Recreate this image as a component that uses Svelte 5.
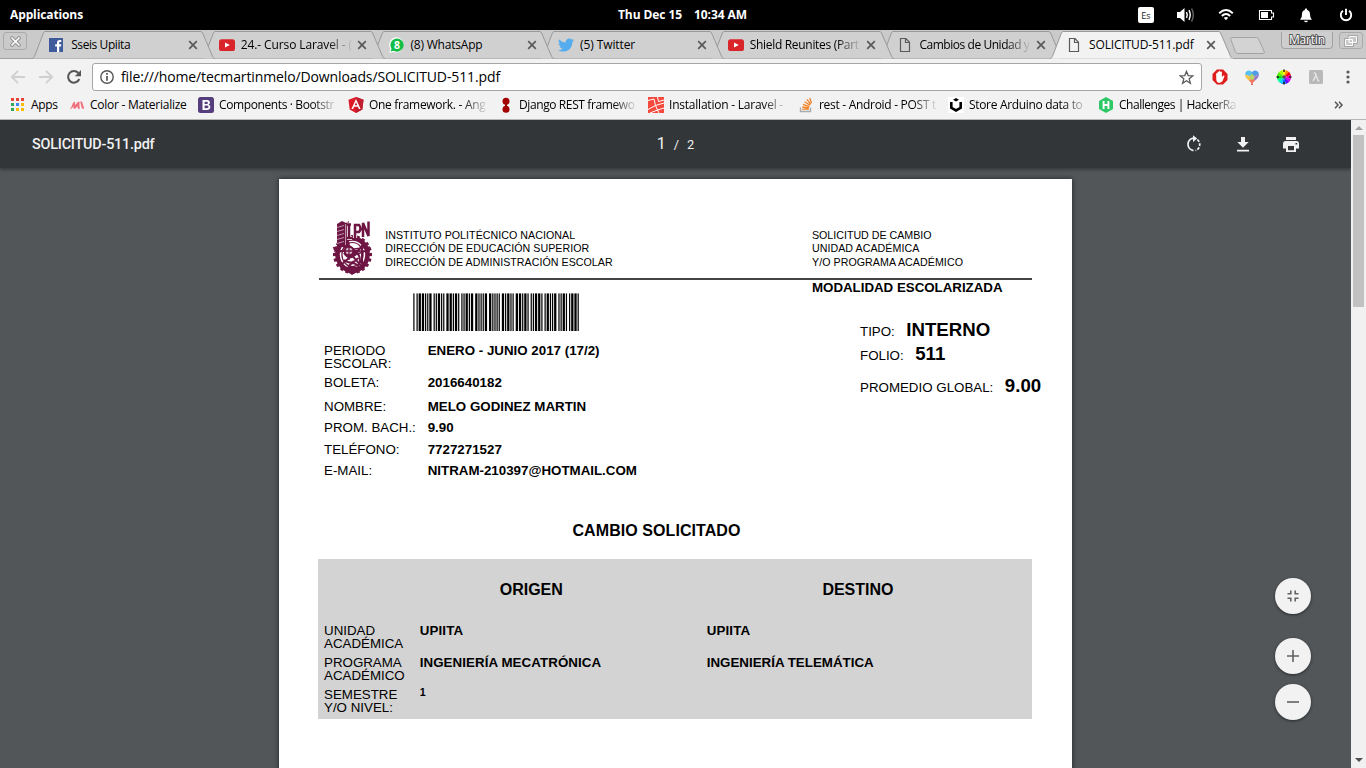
<script>
  const tabs = [
    { icon: 'fb', title: 'Sseis Upiita', w: 59 },
    { icon: 'yt', title: '24.- Curso Laravel - (', w: 111, fade: true },
    { icon: 'wa', title: '(8) WhatsApp', w: 72 },
    { icon: 'tw', title: '(5) Twitter', w: 55 },
    { icon: 'yt', title: 'Shield Reunites (Part', w: 109, fade: true },
    { icon: 'doc', title: 'Cambios de Unidad y', w: 110, fade: true },
    { icon: 'doc', title: 'SOLICITUD-511.pdf', w: 104.5, active: true }
  ];
  const bookmarks = [
    { icon: 'apps', title: 'Apps', w: 26.5, slot: 60 },
    { icon: 'mat', title: 'Color - Materialize', w: 96.5, slot: 129 },
    { icon: 'boot', title: 'Components · Bootstr', w: 115, slot: 150, fade: true },
    { icon: 'ang', title: 'One framework. - Ang', w: 116.5, slot: 150, fade: true },
    { icon: 'dj', title: 'Django REST framewo', w: 115.5, slot: 150, fade: true },
    { icon: 'lar', title: 'Installation - Laravel -', w: 114, slot: 150, fade: true },
    { icon: 'so', title: 'rest - Android - POST t', w: 117, slot: 150, fade: true },
    { icon: 'ins', title: 'Store Arduino data to', w: 113.5, slot: 150, fade: true },
    { icon: 'hr', title: 'Challenges | HackerRa', w: 117, slot: 150, fade: true }
  ];
  const fields = [
    { label: 'PERIODO ESCOLAR:', value: 'ENERO - JUNIO 2017 (17/2)', h: 32 },
    { label: 'BOLETA:', value: '2016640182', h: 24 },
    { label: 'NOMBRE:', value: 'MELO GODINEZ MARTIN', h: 21 },
    { label: 'PROM. BACH.:', value: '9.90', h: 22 },
    { label: 'TELÉFONO:', value: '7727271527', h: 21 },
    { label: 'E-MAIL:', value: 'NITRAM-210397@HOTMAIL.COM', h: 21 }
  ];
  const rows = [
    { label: 'UNIDAD ACADÉMICA', from: 'UPIITA', fw: 43.5, to: 'UPIITA', tw: 43.5 },
    { label: 'PROGRAMA ACADÉMICO', from: 'INGENIERÍA MECATRÓNICA', fw: 181.5, to: 'INGENIERÍA TELEMÁTICA', tw: 167 },
    { label: 'SEMESTRE Y/O NIVEL:', from: '1', fw: 6, to: '', small: true }
  ];

  // Code 39 encoding, wide elements are two modules
  const code39 = {
    '0': 'nnnwwnwnn', '1': 'wnnwnnnnw', '2': 'nnwwnnnnw', '4': 'nnnwwnnnw',
    '6': 'nnwwwnnnn', '8': 'wnnwnnwnn', '*': 'nwnnwnwnn'
  };
  const bars = [];
  let pos = 0;
  for (const ch of '*2016640182*') {
    [...code39[ch]].forEach((e, i) => {
      const w = e === 'w' ? 2 : 1;
      if (i % 2 === 0) bars.push([pos, w]);
      pos += w;
    });
    pos += 1;
  }
  const teeth = Array.from({ length: 20 }, (_, i) => i * 18);
  const hues = ['#ff0', '#f80', '#f00', '#f0a', '#c0f', '#50f', '#06f', '#0cf', '#0f9', '#0d0', '#5e0', '#af0'];

  // Spreads a line of text over an exact width
  function fit(node, w) {
    if (!node.textContent.length) return;
    const natural = node.getBoundingClientRect().width;
    node.style.letterSpacing = (w - natural) / node.textContent.length + 'px';
  }
</script>

{#snippet icon(name)}
  <svg class="ico" viewBox="0 0 16 16" width="16" height="16">
    {#if name === 'fb'}
      <rect x="0" y="1" width="14" height="14" fill="#3f5b9b" />
      <path d="M8 15V9.5H6.2V7.3H8V5.7C8 4 9 3 10.7 3H12.3V5.1H11.2C10.4 5.1 10.2 5.5 10.2 6.1V7.3H12.3L12 9.5H10.2V15Z" fill="#fff" />
    {:else if name === 'yt'}
      <rect x="0" y="2.3" width="16" height="11.7" rx="2.6" fill="#d9252a" />
      <path d="M6 5.5L10.8 8L6 10.5Z" fill="#fff" />
    {:else if name === 'wa'}
      <path d="M8 0.3A7.6 7.6 0 1 1 4.6 15L0.3 16L1.4 12A7.6 7.6 0 0 1 8 .3Z" fill="#fff" />
      <path d="M8 1.4A6.6 6.6 0 1 1 4.8 13.7L1.7 14.5L2.5 11.5A6.6 6.6 0 0 1 8 1.4Z" fill="#13bd45" />
      <text x="8" y="12" text-anchor="middle" font-size="10.5" font-weight="700" font-family="Open Sans, sans-serif" fill="#fff">8</text>
    {:else if name === 'tw'}
      <path d="M16 3.1C15.4 3.4 14.8 3.5 14.1 3.6C14.8 3.2 15.3 2.6 15.5 1.8C14.9 2.2 14.2 2.5 13.4 2.6A3.3 3.3 0 0 0 7.8 5.6C5.1 5.5 2.7 4.2 1.1 2.2C.2 3.7.7 5.6 2.1 6.6C1.6 6.6 1.1 6.4.6 6.2C.6 7.8 1.7 9.1 3.2 9.4C2.8 9.6 2.3 9.6 1.8 9.5C2.2 10.8 3.4 11.7 4.8 11.8A6.6 6.6 0 0 1 0 13.1C5.9 16.9 14.4 13.2 14.4 4.9C15 4.4 15.6 3.8 16 3.1Z" fill="#55acee" />
    {:else if name === 'doc'}
      <path d="M2.5 1.5H8L11.5 5.3V14.5H2.5ZM7.5 1.5V5.5H11.5" fill="none" stroke="#5a5a5a" stroke-width="1.2" />
    {:else if name === 'apps'}
      {#each ['#ea4335', '#ea4335', '#ea4335', '#34a853', '#4285f4', '#fbbc05', '#34a853', '#fbbc05', '#fbbc05'] as c, i}
        <rect x={2 + (i % 3) * 5} y={1 + Math.floor(i / 3) * 5} width="3" height="3" fill={c} />
      {/each}
    {:else if name === 'mat'}
      <path d="M1 11.5C3 11 3.2 5 5.7 4.5C6.4 5.7 5.6 7.3 6.2 8.1C7.5 7 8.2 4.8 10.2 4.5C11 5.6 10 9.3 11 11.5C9.7 12.6 8.5 11.5 8.4 9C7.5 10.5 6.5 12.4 4.8 11.7C4.3 11 4.3 10 4.2 9C3.5 11 2.6 12.3 1 11.5ZM11.2 4.6L13 4.5L15.2 11.5C13.5 12.3 12.8 11.5 12.3 9.5Z" fill="#f0707c" />
    {:else if name === 'boot'}
      <rect width="16" height="16" rx="2.5" fill="#563d7c" />
      <path d="M4.5 3H8.9C12.8 3 12.6 7.1 10.3 7.6C13.4 8.3 13 13 9 13H4.5ZM6.6 4.7V7H8.5C10.5 7 10.3 4.7 8.5 4.7ZM6.6 8.6V11.3H8.7C11.2 11.3 11 8.6 8.7 8.6Z" fill="#fff" fill-rule="evenodd" />
    {:else if name === 'ang'}
      <path d="M8 0L15.5 2.7L14.3 12.5L8 16L1.7 12.5L.5 2.7Z" fill="#dd1b26" />
      <path d="M8 0L15.5 2.7L14.3 12.5L8 16Z" fill="#bf1e2e" />
      <path d="M8 1.9L3.4 12H5.1L6.1 9.8H9.9L10.9 12H12.6ZM8 5.2L9.3 8.3H6.7Z" fill="#fff" fill-rule="evenodd" />
    {:else if name === 'dj'}
      <circle cx="8" cy="4.2" r="3.5" fill="#a30000" /><circle cx="8" cy="12.3" r="3.5" fill="#a30000" />
      <rect x="7" y="7" width="2" height="2" fill="#a30000" />
    {:else if name === 'lar'}
      <rect width="16" height="16" fill="#f4493c" />
      <path d="M0 3.5L6 2L7.5 8.5L16 6M0 12.5L7.5 8.5L9.5 13L16 11M9.5 0L10.5 4.5L16 3M2 16L9.5 13L11 16" stroke="#fff" fill="none" stroke-width="1" />
    {:else if name === 'so'}
      <path d="M2.5 10.5V14.5H12.5V10.5" fill="none" stroke="#a9abae" stroke-width="1.4" />
      <path d="M4.3 12.2H10.8M4.4 10L10.9 11M5 7.4L11.3 9.6M6.6 4.8L12 8.3M9 2.4L12.7 7.3M11.8 1L13.5 6.3" fill="none" stroke="#f48024" stroke-width="1.3" />
    {:else if name === 'ins'}
      <rect width="16" height="16" fill="#fff" />
      <path d="M3.3 5V10.8L8 13.5L12.7 10.8V5" fill="none" stroke="#000" stroke-width="2.6" />
      <path d="M5 2.8L8 1L11 2.8L8 4.6Z" />
    {:else if name === 'hr'}
      <path d="M8 0L15 4V12L8 16L1 12V4Z" fill="#2ec866" />
      <path d="M5.6 4V12M10.4 4V12M5.6 8H10.4" stroke="#fff" stroke-width="1.9" />
    {/if}
  </svg>
{/snippet}

<div class="screen">
  <header class="panel">
    <b class="apps-menu"><span use:fit={73}>Applications</span></b>
    <b class="clock"><span use:fit={64}>Thu Dec 15</span><span use:fit={53}>10:34 AM</span></b>
    <div class="tray">
      <span class="lang">Es</span>
      <svg class="volume" width="20" height="16" viewBox="0 0 20 16"><path d="M1 5H4L8.5 1V15L4 11H1Z" fill="#fff" /><path d="M10.5 5Q12 8 10.5 11M13 3.2Q15.4 8 13 12.8" stroke="#fff" stroke-width="1.5" fill="none" /><path d="M15.6 1.5Q19 8 15.6 14.5" stroke="#666" stroke-width="1.4" fill="none" /></svg>
      <svg class="wifi" width="16" height="14" viewBox="0 0 16 14"><path d="M1.2 5.2Q8 -1 14.8 5.2M3.8 8Q8 4 12.2 8" stroke="#fff" stroke-width="1.9" fill="none" /><path d="M5.8 9.8Q8 8 10.2 9.8L8 12.3Z" fill="#fff" /></svg>
      <svg class="battery" width="17" height="12" viewBox="0 0 17 12"><path d="M1.5 1.5H13.5V4H15.5V8H13.5V10.5H1.5Z" stroke="#fff" stroke-width="1.1" fill="none" /><rect x="3" y="3" width="7" height="6" fill="#fff" /></svg>
      <svg class="bell" width="14" height="15" viewBox="0 0 14 15"><path d="M7 .5C8 .5 8.2 1.2 8.2 2C10.5 2.6 11 4.5 11.1 7C11.2 9.3 12 10.5 13 11.7H1C2 10.5 2.8 9.3 2.9 7C3 4.5 3.5 2.6 5.8 2C5.8 1.2 6 .5 7 .5ZM5 12.7H9Q8.5 14.3 7 14.3T5 12.7Z" fill="#fff" /></svg>
      <svg class="power" width="14" height="14" viewBox="0 0 14 14"><path d="M4 2.8A5.2 5.2 0 1 0 10 2.8M7 .8V7" stroke="#fff" stroke-width="1.9" fill="none" /></svg>
    </div>
  </header>

  <div class="tabstrip">
    <div class="win-close"><svg width="11" height="11" viewBox="0 0 11 11"><path d="M2 2L9 9M9 2L2 9" stroke="#8f8f8f" stroke-width="3.6" stroke-linecap="round" /><path d="M2 2L9 9M9 2L2 9" stroke="#fff" stroke-width="1.7" stroke-linecap="round" /></svg></div>
    {#each tabs as t, i}
      <div class="tab" class:active={t.active} style:z-index={t.active ? 20 : 10 - i}>
        <svg class="shape" width="184" height="29" viewBox="0 0 184 29">
          <path d="M0 28.5C2 28 2 27 3 25L11 4C12 1.8 12 1.5 14 1.5H168C170 1.5 170 2 171 4L180 25C181 27.5 181.5 28.5 183 28.5" fill={t.active ? '#f2f2f2' : '#d0d0d0'} stroke="#999" />
          {#if t.active}<path d="M1 29H183" stroke="#f2f2f2" />{/if}
        </svg>
        <div class="tab-body">
          {@render icon(t.icon)}
          <div class="tab-title" class:fade={t.fade}><span use:fit={t.w}>{t.title}</span></div>
          <svg class="x" width="10" height="10" viewBox="0 0 10 10"><path d="M1.2 1.2L8.8 8.8M8.8 1.2L1.2 8.8" stroke="#5a5a5a" stroke-width="1.7" /></svg>
        </div>
      </div>
    {/each}
    <svg class="newtab" width="36" height="18" viewBox="0 0 36 18"><path d="M2 .5H25.5C27.5 .5 28 1 29 3L34 14C34.6 16 34.5 16.5 33 16.5H9C7 16.5 6 16 5.3 14.5L1 3C.4 1.4.6.5 2 .5Z" fill="#d3d3d3" stroke="#a3a3a3" /></svg>
    <div class="user"><svg width="38" height="15"><text x="1" y="12" textLength="36">Martin</text></svg></div>
    <div class="restore"><svg width="14" height="12" viewBox="0 0 14 12"><path d="M5 1.5H12.5V7.5H5ZM1.5 4.5H8.5V10.5H1.5Z" fill="#ddd" stroke="#999" stroke-width="2.4" /><path d="M5 1.5H12.5V7.5H5ZM1.5 4.5H8.5V10.5H1.5Z" fill="#c8c8c8" stroke="#fff" stroke-width="1" /></svg></div>
  </div>

  <div class="toolbar">
    <svg class="nav" width="16" height="16" viewBox="0 0 16 16"><path d="M15 8H2M8 1.8L1.8 8L8 14.2" fill="none" stroke="#d0d0d0" stroke-width="1.9" /></svg>
    <svg class="nav fwd" width="16" height="16" viewBox="0 0 16 16"><path d="M1 8H14M8 1.8L14.2 8L8 14.2" fill="none" stroke="#d0d0d0" stroke-width="1.9" /></svg>
    <svg class="nav reload" width="16" height="16" viewBox="0 0 16 16"><path d="M13.3 10A5.8 5.8 0 1 1 12.3 4" fill="none" stroke="#555" stroke-width="2" /><path d="M15 1V7.2H8.8Z" fill="#555" /></svg>
    <div class="omnibox">
      <svg width="14" height="14" viewBox="0 0 14 14"><circle cx="7" cy="7" r="6.2" fill="none" stroke="#555" stroke-width="1.4" /><path d="M7 3.1V4.8M7 6.1V10.8" stroke="#555" stroke-width="1.7" /></svg>
      <span class="url"><span use:fit={379}>file:///home/tecmartinmelo/Downloads/SOLICITUD-511.pdf</span></span>
      <svg class="star" width="15" height="15" viewBox="0 0 15 15"><path d="M7.5 1.4L9.2 5.6L13.7 5.9L10.2 8.8L11.4 13.3L7.5 10.8L3.6 13.3L4.8 8.8L1.3 5.9L5.8 5.6Z" fill="none" stroke="#5a5a5a" stroke-width="1.3" /></svg>
    </div>
    <div class="exts">
      <svg width="16" height="16" viewBox="0 0 16 16"><path d="M4.9.5H11.1L15.5 4.9V11.1L11.1 15.5H4.9L.5 11.1V4.9Z" fill="#e01d1d" /><path d="M4.2 8V4.5Q4.8 3.6 5.5 4.5V3Q6.2 2.2 6.9 3V2.3Q7.6 1.5 8.4 2.3V3Q9.2 2.2 9.9 3V8.2L11 6.8Q12.5 6.1 12.5 7.3C11 10 11 13.8 7.5 13.8C4.5 13.8 4.2 11.5 4.2 8Z" fill="#fff" /></svg>
      <svg width="16" height="16" viewBox="0 0 16 16">
        <path d="M8 3.2A3.9 3.9 0 0 0 1 5.5L8 8Z" fill="#56c1ee" /><path d="M8 3.2A3.9 3.9 0 0 1 15 5.5L8 8Z" fill="#4f9be8" />
        <path d="M1 5.5C1 8 3 10 5 11.7L8 8Z" fill="#f7c34a" /><path d="M15 5.5C15 8 13 10 11 11.7L8 8Z" fill="#9a7bd0" />
        <path d="M5 11.7L8 14.4L11 11.7L8 8Z" fill="#f2745c" /><path d="M8 4.5L11 8L8 11.5L5 8Z" fill="#b8d267" /><path d="M7 14.2H9V16H7Z" fill="#e66" />
      </svg>
      <svg width="16" height="16" viewBox="0 0 16 16">
        {#each hues as c, i}<path d="M8 8L6.1 1L9.9 1Z" fill={c} transform="rotate({i * 30} 8 8)" />{/each}
        <circle cx="8" cy="8" r="1.8" fill="#555" /><path d="M8 .5V3M8 13V15.5M.5 8H3M13 8H15.5" stroke="#222" stroke-width="1.5" />
      </svg>
      <svg width="16" height="16" viewBox="0 0 16 16"><rect x="1" y="1" width="14" height="14" rx="1.5" fill="#b9b9b9" /><path d="M5.5 4H7.2L10.2 12H11.5M8 6.5L5 12" stroke="#eee" stroke-width="1.2" fill="none" /></svg>
      <svg class="dots" width="4" height="14" viewBox="0 0 4 14"><circle cx="2" cy="2" r="1.6" /><circle cx="2" cy="7" r="1.6" /><circle cx="2" cy="12" r="1.6" /></svg>
    </div>
  </div>

  <div class="bookmarks">
    {#each bookmarks as b}
      <div class="bm" style:width="{b.slot}px">
        {@render icon(b.icon)}
        <div class="bm-title" class:fade={b.fade}><span use:fit={b.w}>{b.title}</span></div>
      </div>
    {/each}
    <svg class="more" width="9" height="8" viewBox="0 0 9 8"><path d="M1 .8L4 4L1 7.2M5 .8L8 4L5 7.2" fill="none" stroke="#555" stroke-width="1.5" /></svg>
  </div>

  <div class="viewer">
    <div class="stage">
      <div class="pdfbar">
        <span class="name"><span use:fit={122.5}>SOLICITUD-511.pdf</span></span>
        <span class="pages"><span class="cur">1</span><span>/</span><span>2</span></span>
        <span class="actions">
          <svg width="18" height="18" viewBox="0 0 18 18"><path d="M8.5 15.6A6.3 6.3 0 0 1 8.5 3.1" fill="none" stroke="#f1f1f1" stroke-width="1.7" /><path d="M8 .2L12.2 3.5L8 7Z" fill="#f1f1f1" /><path d="M12.3 4.7A6.2 6.2 0 0 1 10.5 15.5" fill="none" stroke="#f1f1f1" stroke-width="1.7" stroke-dasharray="2.8 1.4" /></svg>
          <svg width="14" height="17" viewBox="0 0 14 17"><path d="M5 1H9V6H12.7L7 11.8L1.3 6H5ZM1 13.7H13V15.5H1Z" fill="#f1f1f1" /></svg>
          <svg width="18" height="17" viewBox="0 0 18 17"><path d="M4 1H14V4H4ZM3.3 5H14.7Q17 5 17 7.5V12.5H14V16H4V12.5H1V7.5Q1 5 3.3 5ZM6 10V14.2H12V10ZM13.5 7V8.6H15.2V7Z" fill="#f1f1f1" fill-rule="evenodd" /></svg>
        </span>
      </div>

      <article class="page">
        <div class="head">
          <svg class="seal" width="40" height="56" viewBox="0 0 40 56">
            <g fill="none" stroke="#6e1543">
              <ellipse cx="20.5" cy="34.5" rx="15" ry="16" stroke-width="4.6" />
              {#each teeth as a}<path d="M20.5 15V18" stroke-width="3.2" transform="rotate({a} 20.5 34.5)" />{/each}
              <ellipse cx="20.5" cy="34.5" rx="10.6" ry="12" stroke-width="1.2" />
              <path d="M11 25L31 48M10 44L31 26M14 27C23 29 29 33 28 43M16 48Q20 39 27 47M12 33Q18 42 26 32M30 25V44M12 40Q20 46 26 38" stroke-width="2" />
              <path d="M1 28L15 24L22 29L38 27M2 34L15 29L25 34L37 30M2 31H38" stroke-width="1.4" />
              <circle cx="17" cy="31" r="4.3" stroke-width="2" fill="#d9bccb" />
              <path d="M6 31H28M17 22V40" stroke-width="1.3" />
            </g>
            <path d="M5 4L10 1L14 3L17 1V27H5Z" fill="#6e1543" />
            <path d="M5 7.5L12 5.5M5 11.5L12 9.5M5 15.5L12 13.5M5 19.5L12 17.5M5 23.5L12 21.5M13.5 4V25" stroke="#c7a4b6" stroke-width=".9" />
            <path d="M15 4.5H19M17 4.5V18M15 18H20M23 18V5H27Q30 8.5 27 12H23M31 17V3L36.5 16V1.5" fill="none" stroke="#fff" stroke-width="4.2" />
            <path d="M15 4.5H19M17 4.5V18M15 18H20M23 18V5H27Q30 8.5 27 12H23M31 17V3L36.5 16V1.5" fill="none" stroke="#6e1543" stroke-width="2.5" />
            <path d="M14 51L20 55L27 51L30 47H11Z" fill="#6e1543" />
          </svg>
          <div class="org">
            <div><span use:fit={190}>INSTITUTO POLITÉCNICO NACIONAL</span></div>
            <div><span use:fit={204}>DIRECCIÓN DE EDUCACIÓN SUPERIOR</span></div>
            <div class="third"><span use:fit={227.5}>DIRECCIÓN DE ADMINISTRACIÓN ESCOLAR</span></div>
          </div>
          <div class="form">
            <div><span use:fit={119.5}>SOLICITUD DE CAMBIO</span></div>
            <div><span use:fit={107.3}>UNIDAD ACADÉMICA</span></div>
            <div class="third"><span use:fit={151}>Y/O PROGRAMA ACADÉMICO</span></div>
          </div>
        </div>

        <div class="info">
          <div class="left">
            <svg class="barcode" width="167" height="38" viewBox="0 0 167 38">
              {#each bars as [x, w]}<rect x={0.3 + x * 1.0667} y="0.4" width={w * 1.0667 + 0.15} height="37.6" />{/each}
            </svg>
            {#each fields as f}
              <div class="field" style:height="{f.h}px"><span class="lbl">{f.label}</span><b>{f.value}</b></div>
            {/each}
          </div>
          <div class="right">
            <b class="mode"><span use:fit={190.5}>MODALIDAD ESCOLARIZADA</span></b>
            <div class="sum type"><span>TIPO:</span><b>INTERNO</b></div>
            <div class="sum folio"><span>FOLIO:</span><b>511</b></div>
            <div class="sum avg"><span>PROMEDIO GLOBAL:</span><b>9.00</b></div>
          </div>
        </div>

        <h2><span use:fit={168}>CAMBIO SOLICITADO</span></h2>
        <section class="change">
          <div class="cols"><b>ORIGEN</b><b>DESTINO</b></div>
          {#each rows as r}
            <div class="row"><span class="lbl">{r.label}</span><b class:small={r.small}><span use:fit={r.fw}>{r.from}</span></b><b><span use:fit={r.tw}>{r.to}</span></b></div>
          {/each}
        </section>
      </article>

      <div class="zoom">
        <div class="fab first"><svg width="14" height="14" viewBox="0 0 14 14"><path d="M1.5 4.8H4.8V1.5M9.2 1.5V4.8H12.5M12.5 9.2H9.2V12.5M4.8 12.5V9.2H1.5" /></svg></div>
        <div class="fab"><svg width="14" height="14" viewBox="0 0 14 14"><path d="M1 7H13M7 1V13" /></svg></div>
        <div class="fab"><svg width="14" height="14" viewBox="0 0 14 14"><path d="M1 7H13" /></svg></div>
      </div>
    </div>
    <div class="scroll">
      <svg width="8" height="4" viewBox="0 0 8 4"><path d="M0 4L4 0L8 4Z" fill="#a3a3a3" /></svg>
      <div class="thumb"></div>
      <svg class="down" width="8" height="4" viewBox="0 0 8 4"><path d="M0 0L4 4L8 0Z" fill="#505050" /></svg>
    </div>
  </div>
</div>

<style>
  :global(body) { margin: 0; overflow: hidden; }
  .screen { width: 1366px; height: 768px; display: flex; flex-direction: column; overflow: hidden; font: 12px/16px "Open Sans", sans-serif; color: #000; }
  .screen :global(svg) { display: block; flex: none; }
  span { white-space: nowrap; }
  .panel { height: 30px; background: #000; color: #fff; display: grid; grid-template-columns: 1fr auto 1fr; align-items: center; flex: none; }
  .panel b { font-weight: 700; }
  .apps-menu { padding-left: 10px; }
  .clock { display: flex; gap: 12px; margin-left: -1px; }
  .tray { display: flex; align-items: center; justify-content: flex-end; padding-right: 13px; }
  .lang { width: 16px; height: 16px; border-radius: 2px; background: #fff; color: #222; font-size: 9px; line-height: 17px; text-align: center; margin-right: 22px; }
  .volume { margin-right: 22px; }
  .wifi { margin-right: 24px; }
  .battery { margin-right: 24px; }
  .bell { margin-right: 26px; }

  .tabstrip { height: 29px; flex: none; background: #cacaca; box-shadow: inset 0 -1px #a0a0a0; display: flex; align-items: flex-start; }
  .win-close { width: 22px; height: 16px; margin: 2px 6px 0 3px; border: 1px solid #aaa; border-radius: 3px; display: flex; align-items: center; justify-content: center; flex: none; }
  .tab { width: 169.65px; height: 29px; position: relative; flex: none; }
  .shape { position: absolute; left: -1px; top: 0; }
  .tab-body { position: relative; display: flex; align-items: center; padding: 7px 0 0 16.4px; }
  .tab-title { width: 115px; margin-left: 5.8px; height: 16px; overflow: hidden; white-space: nowrap; }
  .x { margin-left: 1.6px; }
  .fade { -webkit-mask-image: linear-gradient(90deg, #000 80%, transparent 102%); mask-image: linear-gradient(90deg, #000 80%, transparent 102%); }
  .tab-title.fade { width: 111px; margin-right: 4px; -webkit-mask-image: linear-gradient(90deg, #000 78%, transparent 101%); mask-image: linear-gradient(90deg, #000 78%, transparent 101%); }
  .newtab { margin: 7px 0 0 9.5px; }
  .user { width: 50px; height: 16px; margin: 2px 0 0 15px; border: 1px solid #a3a3a3; border-top: 0; border-radius: 0 0 4px 4px; display: flex; justify-content: center; background: #cecece; flex: none; }
  .user text { font: 12px "Open Sans", sans-serif; fill: #fff; stroke: #555; stroke-width: 2px; paint-order: stroke; }
  .restore { width: 22px; height: 15px; margin: 2px 0 0 6px; border: 1px solid #aaa; border-radius: 3px; display: flex; align-items: center; justify-content: center; flex: none; }

  .toolbar { height: 34px; flex: none; background: #f2f2f2; display: flex; align-items: center; padding-left: 10px; }
  .nav { margin-top: 2px; }
  .fwd { margin-left: 12px; }
  .reload { margin-left: 12px; }
  .omnibox { width: 1094px; height: 26px; border: 1px solid #a6a6a6; border-radius: 3px; background: #fff; margin: 2px 0 0 10px; padding: 0 7px; display: flex; align-items: center; font-size: 14px; }
  .url { margin-left: 7px; flex: 1; }
  .exts { display: flex; gap: 16px; margin: 2px 0 0 10px; align-items: center; }
  .dots { fill: #5a5a5a; margin-left: 6px; }

  .bookmarks { height: 26px; flex: none; background: #f2f2f2; border-bottom: 1px solid #b6b6b6; display: flex; align-items: center; padding-left: 9px; }
  .bm { display: flex; gap: 5px; flex: none; padding-bottom: 3px; }
  .bm:first-child { gap: 6px; }
  .bm-title { width: 117px; overflow: hidden; white-space: nowrap; height: 16px; }
  .bm:first-child .bm-title { width: 30px; }
  .more { margin: 0 0 3px 86px; }

  .viewer { flex: 1; min-height: 0; display: flex; background: #525659; }
  .stage { width: 1351px; position: relative; display: flex; flex-direction: column; overflow: hidden; }
  .pdfbar { height: 48px; flex: none; background: #323639; color: #f1f1f1; display: grid; grid-template-columns: 1fr auto 1fr; align-items: center; font-family: Roboto, sans-serif; box-shadow: 0 2px 3px rgba(0, 0, 0, .3); }
  .name { padding: 2px 0 0 32px; font-size: 14.4px; font-weight: 500; }
  .pages { display: flex; gap: 8px; align-items: baseline; font-size: 12.8px; }
  .cur { font-size: 16px; }
  .actions { display: flex; justify-content: flex-end; gap: 32px; align-items: center; padding-right: 51px; }
  .actions svg:first-child { margin-right: 1px; }

  .page { width: 713px; height: 620px; padding: 0 40px; margin: 11px 0 0 279px; background: #fff; flex: none; font-family: "Liberation Sans", Arial, sans-serif; font-size: 13.33px; line-height: 13px; box-shadow: 0 0 5px rgba(0, 0, 0, .6); }
  .head { height: 99px; border-bottom: 2px solid #444; display: flex; align-items: flex-start; }
  .seal { margin: 41px 0 0 12.5px; }
  .org, .form { margin: 50px 0 0 13.7px; font-size: 10.67px; line-height: 13px; width: 426.8px; flex: none; }
  .form { margin-left: 0; width: 200px; }
  .third { margin-top: 1px; }
  .info { display: flex; height: 241px; }
  .left { width: 488px; padding-left: 5px; flex: none; }
  .barcode { margin: 13px 0 13px 89px; }
  .field { display: flex; }
  .lbl { flex: none; white-space: normal; }
  .field .lbl { width: 103.7px; }
  .field:nth-of-type(1) .lbl { width: 80px; margin-right: 23.7px; }
  .right { width: 240px; flex: none; }
  .mode { display: block; margin-top: 1px; }
  .sum { display: flex; align-items: baseline; gap: 11.5px; padding-left: 48px; height: 24px; line-height: 24px; white-space: nowrap; }
  .sum b { font-size: 18.67px; }
  .type { margin-top: 24px; }
  .avg { margin-top: 8px; }
  h2 { margin: 0; font-size: 16px; line-height: 20px; text-align: center; padding-right: 38px; }
  .change { width: 714px; height: 160px; margin: 18px 0 0 -1px; background: #d3d3d3; box-sizing: border-box; padding: 21px 0 0 6px; }
  .cols { display: grid; grid-template-columns: 95px 287px 1fr; font-size: 16px; line-height: 20px; padding-bottom: 24px; }
  .cols b:nth-child(1) { grid-column: 2; padding-left: 80.7px; }
  .cols b:nth-child(2) { padding-left: 116.4px; }
  .row { display: grid; grid-template-columns: 95.7px 287px 1fr; height: 32px; }
  .row .lbl { width: 90px; }
  .small { font-size: 10.67px; line-height: 9px; }

  .zoom { position: absolute; right: 40px; top: 458px; display: flex; flex-direction: column; gap: 10px; }
  .fab { width: 36px; height: 36px; border-radius: 50%; background: #f2f2f2; display: flex; align-items: center; justify-content: center; box-shadow: 0 1px 3px rgba(0, 0, 0, .5); }
  .fab path { fill: none; stroke: #616161; stroke-width: 1.6; }
  .first { margin-bottom: 14px; }
  .scroll { width: 15px; background: #f1f1f1; display: flex; flex-direction: column; align-items: center; padding: 6px 0; box-sizing: border-box; }
  .thumb { width: 11px; height: 172px; background: #c1c1c1; margin-top: 5px; }
  .down { margin-top: auto; }
</style>
